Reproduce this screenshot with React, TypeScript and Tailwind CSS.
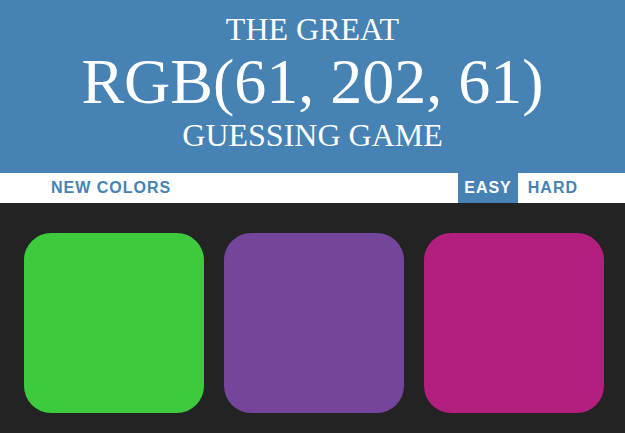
import React from 'react';

const squares = ['#3dca3d', '#75459c', '#b21f7f'];

const App: React.FC = () => {
    return (
        <div className="min-h-[433px] bg-[#232323]">
            <h1 className="bg-[#4682b4] pt-[12px] pb-[20px] text-center font-normal uppercase leading-[1.1] text-white font-['Liberation_Serif',serif]">
                <span className="block text-[32px]">The Great</span>
                <span className="block text-[64px]">RGB(61, 202, 61)</span>
                <span className="block text-[32px]">Guessing Game</span>
            </h1>

            <div className="flex h-[30px] items-stretch bg-white font-['Liberation_Sans',Arial,sans-serif] text-[16px] font-bold uppercase tracking-[1px] text-[#4682b4]">
                <button className="ml-[45px] px-[6px] uppercase">New Colors</button>
                <div className="flex-1" />
                <button className="bg-[#4682b4] px-[6px] uppercase text-white">Easy</button>
                <button className="ml-[4px] mr-[41px] px-[6px] uppercase">Hard</button>
            </div>

            <div className="flex justify-center gap-[20px] pl-[3px] pt-[30px]">
                {squares.map((c) => (
                    <div key={c} className="h-[180px] w-[180px] rounded-[27px]" style={{ backgroundColor: c }} />
                ))}
            </div>
        </div>
    );
};

export default App;
